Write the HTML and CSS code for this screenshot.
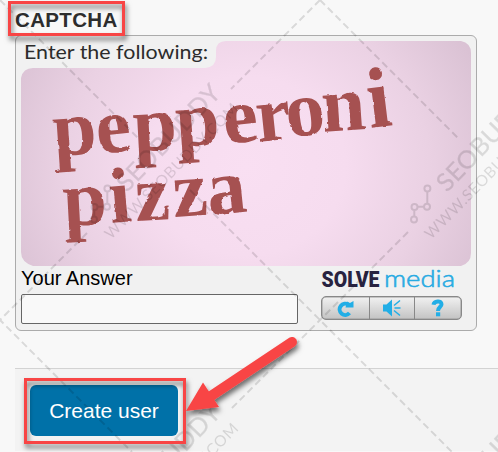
FILE: index.html
```
<!DOCTYPE html>
<html lang="en">
<head>
<meta charset="utf-8">
<title>Create user</title>
<link rel="stylesheet" href="styles.css">
</head>
<body>
<main class="page">
  <h2 class="title">CAPTCHA</h2>
  <section class="captcha">
    <svg class="challenge" width="450" height="225" viewBox="21 41 450 225">
      <defs>
        <radialGradient id="pink" gradientUnits="userSpaceOnUse" cx="0" cy="0" r="1" gradientTransform="translate(246 166) scale(262 235)">
          <stop offset="0" stop-color="#f9dff2"/>
          <stop offset=".38" stop-color="#f6dcef"/>
          <stop offset=".7" stop-color="#ead1e3"/>
          <stop offset="1" stop-color="#d9c1d3"/>
        </radialGradient>
        <filter id="rough" x="-5%" y="-5%" width="110%" height="110%">
          <feTurbulence type="fractalNoise" baseFrequency=".16" numOctaves="2" seed="4"/>
          <feDisplacementMap in="SourceGraphic" scale="2.500" xChannelSelector="R" yChannelSelector="G"/>
        </filter>
      </defs>
      <path fill="url(#pink)" d="M226 41H461Q471 43 471 53V253Q471 263 461 266H33Q21 262 21 252V78Q23 68 33 68H205Q216 67 216 57V51Q216 41 226 41Z"/>
      <text class="prompt" x="24" y="59" textLength="184" lengthAdjust="spacingAndGlyphs">Enter the following:</text>
      <g filter="url(#rough)">
        <text class="words" x="54 98 134 177 225 258 288 323 370" y="156 154 151.500 147 144 142 137.500 132 128" rotate="-4 -6 -3 -4 -6 -6 -7 -4 -7">pepperon<tspan class="tall">i</tspan></text>
        <text class="words" x="64 111 136 174 209" y="226 223 221 217 215.500" rotate="-3 -5 -3 -4 -6">pizza</text>
      </g>
    </svg>
    <div class="controls">
      <div class="answer">
        <label for="answer">Your Answer</label>
        <input id="answer" type="text">
      </div>
      <div class="brand">
        <svg class="logo" width="141" height="26" viewBox="320 266 141 26">
          <text class="solve" x="320.500" y="287" textLength="58" lengthAdjust="spacingAndGlyphs">SOLVE</text>
          <text class="media" x="383" y="287" textLength="71" lengthAdjust="spacingAndGlyphs">media</text>
        </svg>
        <div class="tools">
          <button type="button" aria-label="Reload"><svg width="20" height="18" viewBox="0 0 20 18"><path d="M13.500 14A5.600 5.600 0 1 1 12.500 5.800" fill="none" stroke="#22aee6" stroke-width="4"/><path fill="#22aee6" d="M11 2.500 14 4 17.500 2V8.500H9.500Z"/></svg></button>
          <button type="button" aria-label="Audio"><svg width="20" height="18" viewBox="0 0 20 18"><path fill="#22aee6" d="M1 5.500H4.500L10 .5V17.500L4.500 12.500H1Z"/><path stroke="#22aee6" stroke-width="1.500" d="M12 6.500 18 1.500M12.500 9H18.500M12 11.500 18 16.500"/></svg></button>
          <button type="button" aria-label="Help"><svg width="20" height="18" viewBox="0 0 20 18"><path fill="none" stroke="#22aee6" stroke-width="4" d="M5.500 5.800C6 2 13.500 1 13.500 5.200C13.500 8.200 10 8 10 12"/><path fill="#22aee6" d="M8 13.300h4.200v4h-4.200z"/></svg></button>
        </div>
      </div>
    </div>
  </section>
  <footer class="actions"><button type="button" class="submit">Create user</button></footer>
</main>

<svg class="overlay" width="498" height="452" viewBox="0 0 498 452">
  <defs>
    <filter id="shadow" x="-10%" y="-20%" width="125%" height="155%">
      <feDropShadow dx="1.500" dy="4" stdDeviation="2.500" flood-color="#000" flood-opacity=".55"/>
    </filter>
    <g id="stamp">
      <g class="nodes"><path d="M94.300 216.500V210M97.500 206.800H104M107.300 203.500V191.800"/><circle cx="94" cy="219.500" r="3"/><circle cx="94.500" cy="207" r="3"/><circle cx="107" cy="206.700" r="3"/><circle cx="107.400" cy="188.500" r="3"/></g>
      <text class="mark" transform="translate(127 193) rotate(-46)" textLength="137">SEOBUDDY</text>
      <text class="site" transform="translate(111 240) rotate(-45.500)" textLength="183">WWW.SEOBUDDY.COM</text>
    </g>
  </defs>
  <g class="watermark">
    <path class="dashes" d="M0 0 138 138M190 190 320 320 452 452M320 0 458 138M320 0 231 89M87 233 0 320 132 452M408 232 320 320 231 409"/>
    <use href="#stamp"/>
    <use href="#stamp" x="320"/>
    <use href="#stamp" y="320"/>
    <use href="#stamp" x="320" y="320"/>
  </g>
  <g filter="url(#shadow)"><rect class="frame" x="9.500" y="2.500" width="114" height="32"/></g>
  <g filter="url(#shadow)"><rect class="frame" x="25.500" y="379.500" width="159" height="63"/></g>
  <g filter="url(#shadow)"><path class="shaft" d="M292 342 208 398"/><path class="head" d="M186 411 203 382.500 219 407Z"/></g>
</svg>
</body>
</html>
```
FILE: styles.css
```
* { box-sizing: border-box; }
body {
  margin: 0;
  width: 498px;
  height: 452px;
  overflow: hidden;
  background: #f8f8f8;
  font-family: "Liberation Sans", Arial, sans-serif;
  font-size: 20px;
  color: #000;
}
.page { padding-left: 15px; }
.title {
  margin: 0;
  height: 35px;
  padding-top: 8px;
  font-size: 20.5px;
  line-height: 24px;
  letter-spacing: .35px;
  color: #2d2d2d;
}
.captcha {
  width: 462px;
  height: 296px;
  padding: 5px;
  border: 1px solid #ababab;
  border-radius: 6px;
  background: #f1f1f1;
}
.challenge { display: block; }
.prompt { font: 19px Lato, sans-serif; fill: #2c2c2c; }
.words { font: bold 79px "Liberation Serif", serif; fill: #a65151; }
.tall { font-size: 86px; }
.controls { display: flex; gap: 22px; }
.answer { width: 278px; }
.answer label { display: block; height: 28px; line-height: 24px; }
.answer input {
  display: block;
  width: 277px;
  height: 30px;
  border: 1px solid #666;
  border-radius: 2px;
  background: #f9f9f9;
}
.logo { display: block; overflow: visible; }
.solve { font: 900 22px Roboto, sans-serif; fill: #282340; }
.media { font: 300 24px Lato, sans-serif; fill: #29abe2; stroke: #29abe2; stroke-width: .6px; }
.tools {
  display: grid;
  grid-template-columns: 48px 45px 1fr;
  width: 141px;
  height: 24px;
  margin-top: 4px;
  border: 1px solid #888;
  border-radius: 5px;
  box-shadow: inset 0 0 0 .5px #999;
  background: linear-gradient(#f1f1f1, #c3c3c3);
}
.tools button {
  display: flex;
  align-items: center;
  justify-content: center;
  padding: 0;
  border: 0;
  border-right: 1px solid #888;
  background: none;
}
.tools button:last-child { border-right: 0; }
.actions {
  height: 83px;
  margin-top: 37px;
  padding: 16px 15px;
  border-top: 1px solid #d3d3d3;
  background: #f3f3f3;
}
.submit {
  display: block;
  width: 148px;
  height: 51px;
  padding: 0;
  border: 0;
  border-radius: 6px;
  background: #0071a8;
  color: #fff;
  font: 21px "Liberation Sans", Arial, sans-serif;
}
.overlay { position: absolute; left: 0; top: 0; pointer-events: none; }
.watermark { opacity: .12; }
.dashes { fill: none; stroke: #000; stroke-width: 2px; stroke-dasharray: 7 4; }
.nodes { fill: none; stroke: #000; stroke-width: 2px; }
.mark { font: 25px Lato, sans-serif; stroke: #000; stroke-width: .3px; }
.site { font: 15.500px Lato, sans-serif; }
.frame { fill: none; stroke: #f84444; stroke-width: 3px; }
.shaft { stroke: #f84444; stroke-width: 10px; stroke-linecap: round; }
.head { fill: #f84444; }
```
